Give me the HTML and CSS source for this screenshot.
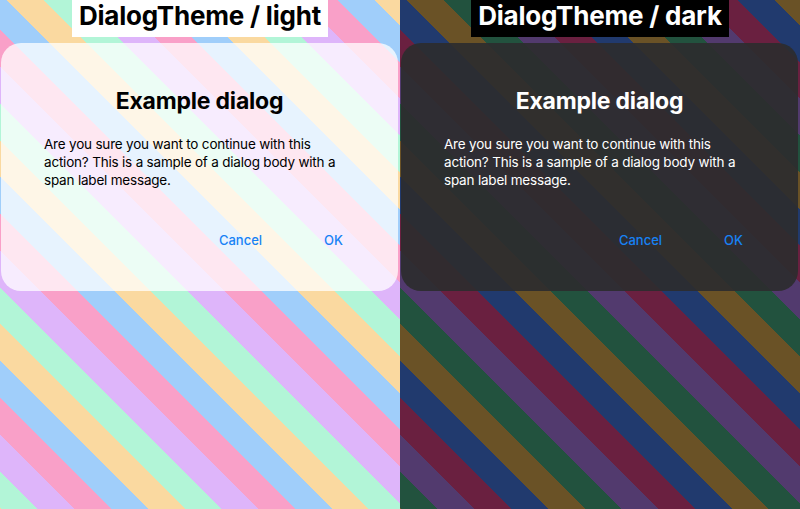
FILE: index.html
```html
<!DOCTYPE html>
<html lang="en">
<head>
<meta charset="utf-8">
<title>DialogTheme</title>
<link rel="stylesheet" href="styles.css">
</head>
<body>
<div class="stage">
  <section class="panel panel-light">
    <div class="label">DialogTheme / light</div>
    <div class="dialog">
      <h1 class="dialog-title">Example dialog</h1>
      <p class="dialog-body">Are you sure you want to continue with this action? This is a sample of a dialog body with a span label message.</p>
      <div class="dialog-actions">
        <span class="action action-cancel">Cancel</span>
        <span class="action action-ok">OK</span>
      </div>
    </div>
  </section>
  <section class="panel panel-dark">
    <div class="label">DialogTheme / dark</div>
    <div class="dialog">
      <h1 class="dialog-title">Example dialog</h1>
      <p class="dialog-body">Are you sure you want to continue with this action? This is a sample of a dialog body with a span label message.</p>
      <div class="dialog-actions">
        <span class="action action-cancel">Cancel</span>
        <span class="action action-ok">OK</span>
      </div>
    </div>
  </section>
</div>
</body>
</html>
```

FILE: styles.css
```css
* { box-sizing: border-box; }
html, body { margin: 0; padding: 0; }
body {
  width: 800px;
  height: 509px;
  overflow: hidden;
  font-family: Inter, "Noto Sans", "Liberation Sans", sans-serif;
}
.stage {
  display: flex;
  width: 800px;
  height: 509px;
}
.panel {
  width: 400px;
  height: 509px;
  display: flex;
  flex-direction: column;
  align-items: flex-start;
}
.panel-light {
  background: repeating-linear-gradient(225deg,
    #fad9a0 0px, #fad9a0 17.9px,
    #a0cefa 17.9px, #a0cefa 43.9px,
    #f9a0c8 43.9px, #f9a0c8 69.9px,
    #deb5fa 69.9px, #deb5fa 95.9px,
    #b2f5d7 95.9px, #b2f5d7 121.9px,
    #fad9a0 121.9px, #fad9a0 130px);
}
.panel-dark {
  background: repeating-linear-gradient(225deg,
    #6a5226 0px, #6a5226 17.9px,
    #213a6e 17.9px, #213a6e 43.9px,
    #6a2040 43.9px, #6a2040 69.9px,
    #523a6e 69.9px, #523a6e 95.9px,
    #22523e 95.9px, #22523e 121.9px,
    #6a5226 121.9px, #6a5226 130px);
}
.label {
  align-self: center;
  height: 37px;
  padding: 0 7px 6px 7px;
  font-size: 26px;
  font-weight: 700;
  line-height: 31px;
  letter-spacing: -0.2px;
  white-space: nowrap;
}
.panel-light .label { background: #ffffff; color: #000000; }
.panel-dark .label { background: #000000; color: #ffffff; }
.dialog {
  margin: 6px 0 0 1px;
  width: 397px;
  border-radius: 20px;
  padding: 44px 43px 42px 43px;
  display: flex;
  flex-direction: column;
}
.panel-light .dialog { background: rgba(255, 255, 255, 0.75); color: #000000; }
.panel-dark .dialog { background: rgba(44, 44, 46, 0.92); color: #ffffff; }
.dialog-title {
  margin: 0;
  text-align: center;
  font-size: 23px;
  font-weight: 700;
  line-height: 28px;
  letter-spacing: -0.2px;
}
.dialog-body {
  margin: 20px 0 0 0;
  font-size: 13.5px;
  line-height: 18px;
  font-weight: 400;
  letter-spacing: -0.2px;
}
.dialog-actions {
  margin-top: 42px;
  display: flex;
  justify-content: flex-end;
  gap: 62px;
  padding-right: 12px;
}
.action {
  font-size: 13px;
  line-height: 18px;
  font-weight: 500;
  color: #1782f5;
}
```
